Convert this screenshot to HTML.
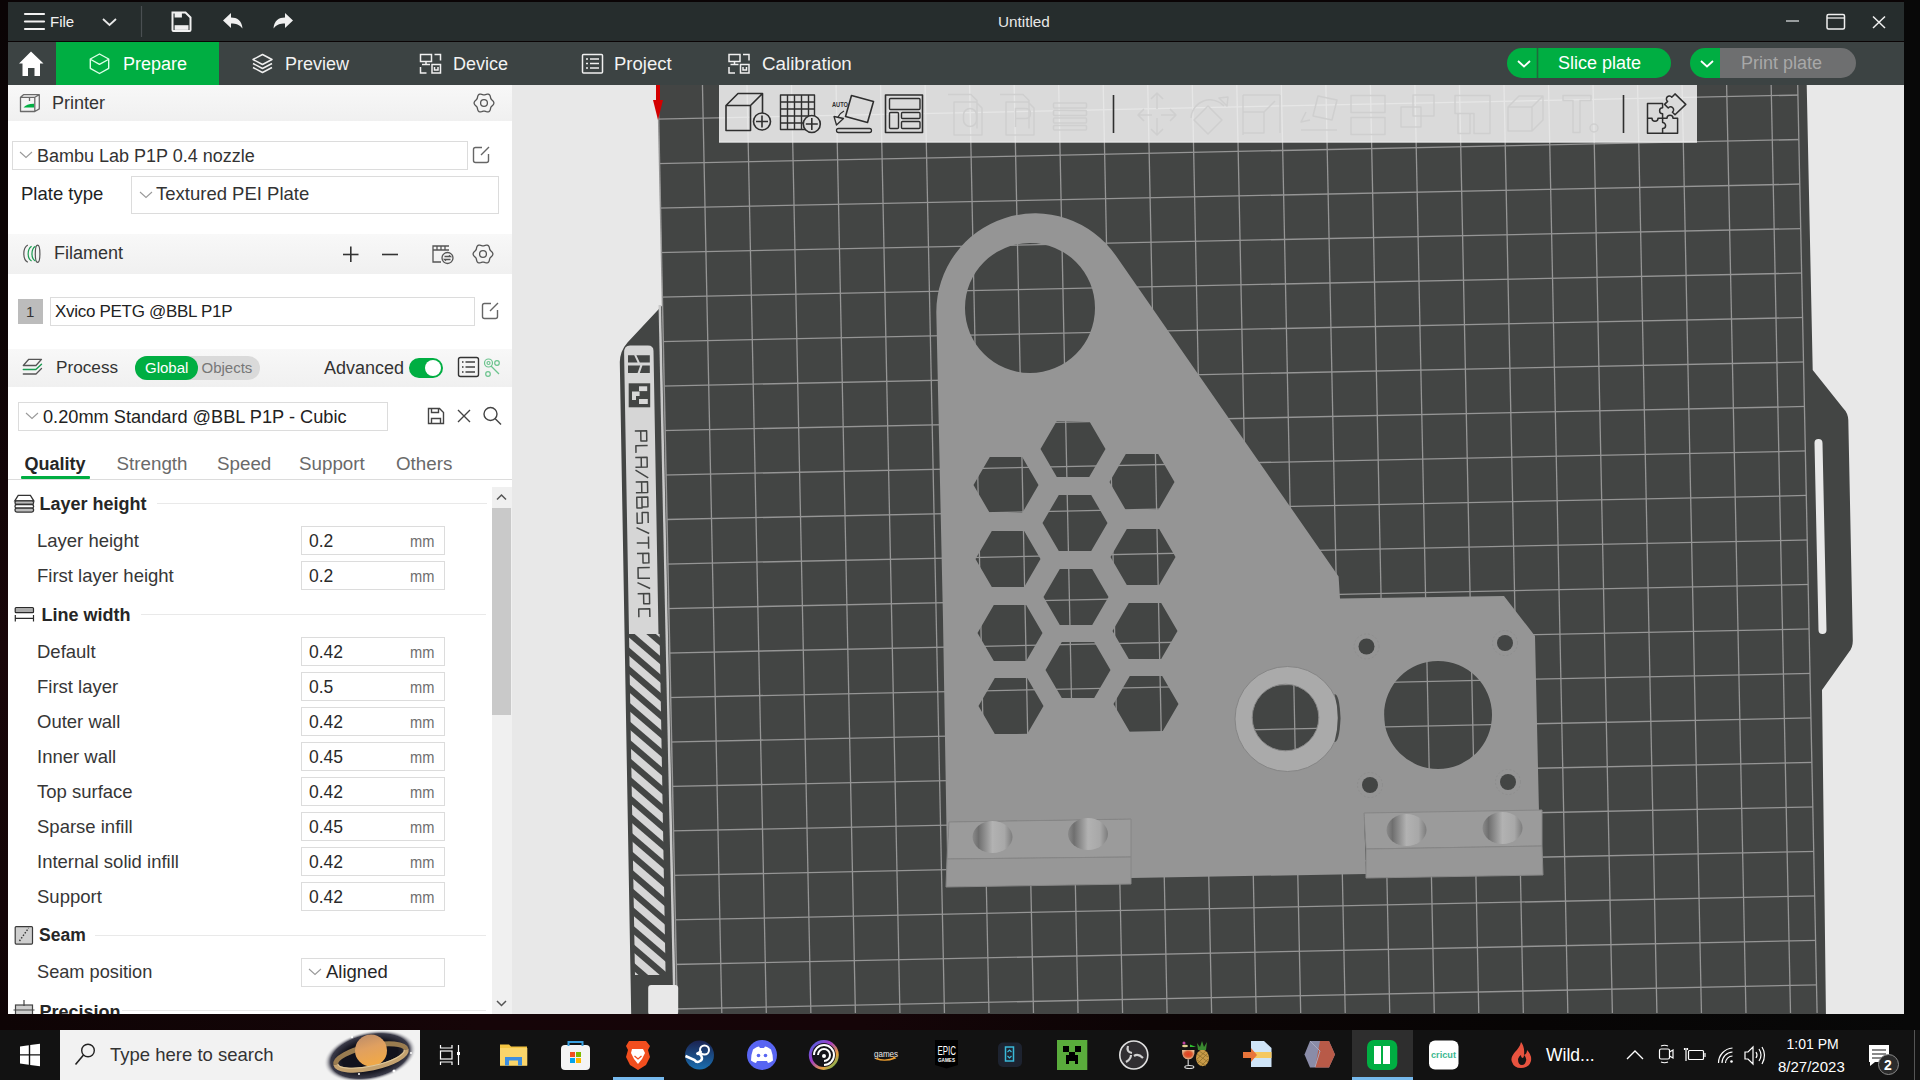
<!DOCTYPE html>
<html><head><meta charset="utf-8">
<style>
*{box-sizing:border-box;margin:0;padding:0}
html,body{width:1920px;height:1080px;overflow:hidden;background:linear-gradient(#0a0405 0%,#0d0405 30%,#190609 60%,#140507 85%,#0c0304 100%);font-family:"Liberation Sans",sans-serif}
.a{position:absolute}
.t{position:absolute;white-space:nowrap;line-height:1}
#title{left:8px;top:2px;width:1896px;height:39px;background:#262d2d}
#nav{left:8px;top:42px;width:1896px;height:43px;background:#3c4343}
#panel{left:8px;top:85px;width:504px;height:929px;background:#fff;overflow:hidden}
#view{left:512px;top:85px;width:1392px;height:929px;background:#e8e8e8;overflow:hidden}
#band{left:0;top:1014px;width:1920px;height:16px;background:linear-gradient(90deg,#0e0405,#160508 25%,#150508 45%,#0c0405 60%,#070505 80%,#080808)}
#rstrip{left:1904px;top:0;width:16px;height:1030px;background:#080808}
#taskbar{left:0;top:1030px;width:1920px;height:50px;background:#121212}
.hdr{position:absolute;left:0;width:504px;background:linear-gradient(#f7f7f7,#efefef)}
.lbl{font-size:18px;color:#363636}
.box{position:absolute;border:1px solid #dcdcdc;background:#fff}
.unit{font-size:14px;color:#6f6f6f}
svg{overflow:visible}
</style></head>
<body>
<div id="title" class="a"></div>
<svg class="a" style="left:0;top:0" width="1920" height="42" viewBox="0 0 1920 42">
 <g stroke="#f2f2f2" stroke-width="2.2" stroke-linecap="round" fill="none">
  <line x1="25" y1="14" x2="44" y2="14"/><line x1="25" y1="21.5" x2="44" y2="21.5"/><line x1="25" y1="29" x2="44" y2="29"/>
 </g>
 <polyline points="103,19 109.5,25 116,19" stroke="#e8e8e8" stroke-width="1.8" fill="none"/>
 <line x1="141.5" y1="6" x2="141.5" y2="37" stroke="#4a4f52" stroke-width="1.2"/>
 <!-- save -->
 <path d="M172.5,12.5 h13 l5,5 v12.5 a1,1 0 0 1 -1,1 h-16 a1,1 0 0 1 -1,-1 z" stroke="#f0f0f0" stroke-width="2" fill="none"/>
 <rect x="174.6" y="12" width="7.3" height="5.5" fill="#f0f0f0"/>
 <rect x="174.6" y="25.2" width="13.9" height="4.7" fill="#f0f0f0"/>
 <!-- undo -->
 <path d="M223,20.5 L231,13 L231,17.5 C237,17.5 242,20.5 242.5,28.5 C239.5,24.5 236,23.5 231,23.5 L231,28 Z" fill="#f0f0f0"/>
 <!-- redo -->
 <path d="M293,20.5 L285,13 L285,17.5 C279,17.5 274,20.5 273.5,28.5 C276.5,24.5 280,23.5 285,23.5 L285,28 Z" fill="#f0f0f0"/>
 <!-- window controls -->
 <line x1="1786" y1="21" x2="1799" y2="21" stroke="#bfc3c4" stroke-width="1.5"/>
 <rect x="1827" y="14.5" width="17.5" height="14.5" rx="1.5" fill="none" stroke="#f0f0f0" stroke-width="1.5"/>
 <line x1="1827" y1="18" x2="1844.5" y2="18" stroke="#f0f0f0" stroke-width="1.3"/>
 <g stroke="#f0f0f0" stroke-width="1.5"><line x1="1873" y1="16.5" x2="1885" y2="28"/><line x1="1885" y1="16.5" x2="1873" y2="28"/></g>
</svg>
<div class="t" style="left:50px;top:14px;font-size:15px;color:#f2f2f2">File</div>
<div class="t" style="left:998px;top:14px;font-size:15.3px;color:#e8e8e8">Untitled</div>

<div id="nav" class="a"></div>
<div class="a" style="left:56px;top:42px;width:163px;height:43px;background:#00ae42"></div>
<svg class="a" style="left:0;top:42px" width="1920" height="43" viewBox="0 42 1920 43">
 <!-- home -->
 <path d="M31,51.5 L43.5,63.5 L40,63.5 L40,76 L34.5,76 L34.5,68 L28,68 L28,76 L22.5,76 L22.5,63.5 L19,63.5 Z" fill="#ffffff"/>
 <!-- cube -->
 <g stroke="#dcffe8" stroke-width="1.4" fill="none" stroke-linejoin="round">
  <path d="M99.5,54 L108.7,59 L108.7,68.3 L99.5,73.5 L90.3,68.3 L90.3,59 Z"/>
  <path d="M90.8,59.5 L99.5,64.3 L108.3,59.5"/>
 </g>
 <!-- layers -->
 <g stroke="#f0f0f0" stroke-width="1.5" fill="none" stroke-linejoin="round">
  <path d="M262.5,54.5 L272,59.5 L262.5,64.5 L253,59.5 Z"/>
  <path d="M253,63.5 L262.5,68.5 L272,63.5"/>
  <path d="M253,67.5 L262.5,72.5 L272,67.5"/>
 </g>
 <!-- device -->
 <g stroke="#f0f0f0" stroke-width="1.5" fill="none">
  <rect x="420.5" y="54.5" width="11" height="7"/><line x1="426" y1="61.5" x2="426" y2="64"/><line x1="422" y1="64.5" x2="430" y2="64.5"/>
  <path d="M434.5,54.5 h6 v6"/><path d="M420.5,67 v6 h6"/>
  <rect x="432" y="64.5" width="8.5" height="8.5"/><path d="M434.5,67 v3 h3.5 v-3"/>
 </g>
 <!-- project -->
 <g stroke="#f0f0f0" stroke-width="1.5" fill="none">
  <rect x="582.5" y="54.5" width="20" height="18.5" rx="1"/>
  <line x1="586" y1="59" x2="588" y2="59"/><line x1="590" y1="59" x2="599" y2="59"/>
  <line x1="586" y1="63.5" x2="588" y2="63.5"/><line x1="590" y1="63.5" x2="599" y2="63.5"/>
  <line x1="586" y1="68" x2="588" y2="68"/><line x1="590" y1="68" x2="599" y2="68"/>
 </g>
 <!-- calibration -->
 <g stroke="#f0f0f0" stroke-width="1.5" fill="none">
  <rect x="729" y="54.5" width="11" height="7"/><line x1="734.5" y1="61.5" x2="734.5" y2="64"/><line x1="730.5" y1="64.5" x2="738.5" y2="64.5"/>
  <path d="M743,54.5 h6 v6"/><path d="M729,67 v6 h6"/>
  <rect x="740.5" y="64.5" width="8.5" height="8.5"/><path d="M743,67 v3 h3.5 v-3"/>
 </g>
 <!-- slice plate -->
 <rect x="1507" y="48" width="164" height="30" rx="15" fill="#00ae42"/>
 <line x1="1537.5" y1="48" x2="1537.5" y2="78" stroke="#1f6b3c" stroke-width="1.6"/>
 <polyline points="1518,61 1524,66.5 1530,61" stroke="#fff" stroke-width="1.8" fill="none"/>
 <!-- print plate -->
 <path d="M1720,48 H1841 A15,15 0 0 1 1841,78 H1720 Z" fill="#6e6f70"/>
 <path d="M1720,48 H1705 A15,15 0 0 0 1705,78 H1720 Z" fill="#00ae42"/>
 <polyline points="1701,61 1707,66.5 1713,61" stroke="#fff" stroke-width="1.8" fill="none"/>
</svg>
<div class="t" style="left:123px;top:55px;font-size:18px;color:#ffffff">Prepare</div>
<div class="t" style="left:285px;top:55px;font-size:18px;color:#f2f2f2">Preview</div>
<div class="t" style="left:453px;top:55px;font-size:18px;color:#f2f2f2">Device</div>
<div class="t" style="left:614px;top:55px;font-size:18.5px;color:#f2f2f2">Project</div>
<div class="t" style="left:762px;top:55px;font-size:18.8px;color:#f2f2f2">Calibration</div>
<div class="t" style="left:1558px;top:54px;font-size:18px;color:#ffffff">Slice plate</div>
<div class="t" style="left:1741px;top:54px;font-size:18px;color:#a8a8a8">Print plate</div>

<div id="panel" class="a"></div>
<!-- headers -->
<div class="a" style="left:8px;top:85px;width:504px;height:36px;background:linear-gradient(#f8f8f8,#f0f0f0)"></div>
<div class="a" style="left:8px;top:234px;width:504px;height:40px;background:linear-gradient(#f8f8f8,#f0f0f0)"></div>
<div class="a" style="left:8px;top:349px;width:504px;height:38px;background:linear-gradient(#f8f8f8,#f0f0f0)"></div>
<!-- boxes -->
<div class="box" style="left:12px;top:141px;width:456px;height:29px"></div>
<div class="box" style="left:131px;top:176px;width:368px;height:38px"></div>
<div class="a" style="left:18px;top:299px;width:25px;height:25px;background:#bcbcbc"></div>
<div class="box" style="left:50px;top:297px;width:425px;height:29px"></div>
<div class="a" style="left:135px;top:356px;width:125px;height:24px;border-radius:12px;background:#dadada"></div>
<div class="a" style="left:135px;top:356px;width:63px;height:24px;border-radius:12px;background:#00ae42"></div>
<div class="a" style="left:409px;top:358px;width:34px;height:20px;border-radius:10px;background:#00ae42"></div>
<div class="a" style="left:425px;top:360px;width:16px;height:16px;border-radius:8px;background:#fff"></div>
<div class="box" style="left:18px;top:402px;width:370px;height:29px"></div>
<!-- tabs line -->
<div class="a" style="left:8px;top:479px;width:504px;height:1px;background:#dcdcdc"></div>
<div class="a" style="left:21px;top:476px;width:69px;height:3px;border-radius:1px;background:#00ae42"></div>
<!-- scrollbar -->
<div class="a" style="left:492px;top:487px;width:20px;height:527px;background:#f0f0f0"></div>
<div class="a" style="left:492px;top:508px;width:19px;height:207px;background:#c9c9c9"></div>
<!-- section lines -->
<div class="a" style="left:157px;top:503px;width:330px;height:1px;background:#e9e9e9"></div>
<div class="a" style="left:141px;top:614px;width:345px;height:1px;background:#e9e9e9"></div>
<div class="a" style="left:95px;top:935px;width:391px;height:1px;background:#e9e9e9"></div>
<div class="a" style="left:122px;top:1010px;width:364px;height:1px;background:#e9e9e9"></div>
<!-- value boxes -->
<div class="box" style="left:301px;top:526px;width:144px;height:29px"></div>
<div class="box" style="left:301px;top:561px;width:144px;height:29px"></div>
<div class="box" style="left:301px;top:637px;width:144px;height:29px"></div>
<div class="box" style="left:301px;top:672px;width:144px;height:29px"></div>
<div class="box" style="left:301px;top:707px;width:144px;height:29px"></div>
<div class="box" style="left:301px;top:742px;width:144px;height:29px"></div>
<div class="box" style="left:301px;top:777px;width:144px;height:29px"></div>
<div class="box" style="left:301px;top:812px;width:144px;height:29px"></div>
<div class="box" style="left:301px;top:847px;width:144px;height:29px"></div>
<div class="box" style="left:301px;top:882px;width:144px;height:29px"></div>
<div class="box" style="left:301px;top:958px;width:144px;height:29px"></div>
<!-- icons -->
<svg class="a" style="left:0;top:85px" width="512" height="929" viewBox="0 85 512 929">
 <!-- printer icon -->
 <g stroke="#6a6a6a" stroke-width="1.3" fill="none" stroke-linejoin="round">
  <path d="M20.5,97.3 h14.3 v14.2 h-14.3 z M20.5,97.3 l3,-2.6 h15.8 v14.2 l-4.5,2.6 M34.8,97.3 l4.5,-2.6"/>
  <path d="M29.5,97.5 v3.5"/>
 </g>
 <path d="M23.5,107.6 q3,-4 10.5,-3.9 v3.9 z" fill="#00ae42"/>
 <!-- gear printer -->
 <g stroke="#555" stroke-width="1.3" fill="none">
  <path d="M493.90,103.00 L493.74,103.85 L493.31,104.64 L492.69,105.33 L492.03,105.92 L491.45,106.47 L491.01,107.05 L490.73,107.72 L490.55,108.50 L490.36,109.36 L490.07,110.24 L489.61,111.01 L488.95,111.57 L488.13,111.86 L487.23,111.88 L486.33,111.69 L485.48,111.42 L484.72,111.19 L484.00,111.10 L483.28,111.19 L482.52,111.42 L481.67,111.69 L480.77,111.88 L479.87,111.86 L479.05,111.57 L478.39,111.01 L477.93,110.24 L477.64,109.36 L477.45,108.50 L477.27,107.72 L476.99,107.05 L476.55,106.47 L475.97,105.92 L475.31,105.33 L474.69,104.64 L474.26,103.85 L474.10,103.00 L474.26,102.15 L474.69,101.36 L475.31,100.67 L475.97,100.08 L476.55,99.53 L476.99,98.95 L477.27,98.28 L477.45,97.50 L477.64,96.64 L477.93,95.76 L478.39,94.99 L479.05,94.43 L479.87,94.14 L480.77,94.12 L481.67,94.31 L482.52,94.58 L483.28,94.81 L484.00,94.90 L484.72,94.81 L485.48,94.58 L486.33,94.31 L487.23,94.12 L488.13,94.14 L488.95,94.43 L489.61,94.99 L490.07,95.76 L490.36,96.64 L490.55,97.50 L490.73,98.28 L491.01,98.95 L491.45,99.53 L492.03,100.08 L492.69,100.67 L493.31,101.36 L493.74,102.15 Z"/>
  <circle cx="484" cy="103" r="3.4"/>
 </g>
 <!-- chevrons -->
 <g stroke="#9a9a9a" stroke-width="1.1" fill="none">
  <polyline points="20,152 26,157.5 32,152"/>
  <polyline points="140,192 146,197.5 152,192"/>
  <polyline points="26,413 32,418.5 38,413"/>
  <polyline points="309,969 315,974.5 321,969"/>
 </g>
 <!-- edit icons -->
 <g stroke="#666" stroke-width="1.4" fill="none">
  <path d="M482,147.5 h-6.5 a2,2 0 0 0 -2,2 v11 a2,2 0 0 0 2,2 h11 a2,2 0 0 0 2,-2 v-6.5 M481,155 l8,-8"/>
  <path d="M491,303.5 h-6.5 a2,2 0 0 0 -2,2 v11 a2,2 0 0 0 2,2 h11 a2,2 0 0 0 2,-2 v-6.5 M490,311 l8,-8"/>
 </g>
 <!-- filament icon -->
 <g stroke="#555" stroke-width="1.2" fill="none">
  <path d="M27.8,245 C22.5,248 22.5,259.5 27.8,262.3"/>
  <ellipse cx="37.6" cy="253.8" rx="2.3" ry="8.6"/>
 </g>
 <g stroke="#1a9a50" stroke-width="1.2" fill="none">
  <path d="M31.6,246.2 C27,249 27,258.5 31.6,261"/>
  <path d="M35.4,246.2 C30.8,249 30.8,258.5 35.4,261"/>
 </g>
 <!-- plus minus -->
 <g stroke="#333" stroke-width="1.6">
  <line x1="343" y1="254.5" x2="358.5" y2="254.5"/><line x1="350.8" y1="246.5" x2="350.8" y2="262"/>
  <line x1="382" y1="254.5" x2="398" y2="254.5"/>
 </g>
 <!-- filament sync icon -->
 <g stroke="#555" stroke-width="1.3" fill="none">
  <path d="M449,246 h-16 v16 h8"/><path d="M433,250 h16 M437,246 v4 M441,246 v4 M445,246 v4"/>
  <circle cx="447.5" cy="258" r="5.5" fill="#f3f3f3"/>
  <path d="M444.5,256.5 h6 l-1.5,-1.3 M450.5,259.5 h-6 l1.5,1.3"/>
 </g>
 <!-- gear filament -->
 <g stroke="#555" stroke-width="1.3" fill="none">
  <path d="M492.90,254.00 L492.74,254.85 L492.31,255.64 L491.69,256.33 L491.03,256.92 L490.45,257.47 L490.01,258.05 L489.73,258.72 L489.55,259.50 L489.36,260.36 L489.07,261.24 L488.61,262.01 L487.95,262.57 L487.13,262.86 L486.23,262.88 L485.33,262.69 L484.48,262.42 L483.72,262.19 L483.00,262.10 L482.28,262.19 L481.52,262.42 L480.67,262.69 L479.77,262.88 L478.87,262.86 L478.05,262.57 L477.39,262.01 L476.93,261.24 L476.64,260.36 L476.45,259.50 L476.27,258.72 L475.99,258.05 L475.55,257.47 L474.97,256.92 L474.31,256.33 L473.69,255.64 L473.26,254.85 L473.10,254.00 L473.26,253.15 L473.69,252.36 L474.31,251.67 L474.97,251.08 L475.55,250.53 L475.99,249.95 L476.27,249.28 L476.45,248.50 L476.64,247.64 L476.93,246.76 L477.39,245.99 L478.05,245.43 L478.87,245.14 L479.77,245.12 L480.67,245.31 L481.52,245.58 L482.28,245.81 L483.00,245.90 L483.72,245.81 L484.48,245.58 L485.33,245.31 L486.23,245.12 L487.13,245.14 L487.95,245.43 L488.61,245.99 L489.07,246.76 L489.36,247.64 L489.55,248.50 L489.73,249.28 L490.01,249.95 L490.45,250.53 L491.03,251.08 L491.69,251.67 L492.31,252.36 L492.74,253.15 Z"/>
  <circle cx="483" cy="254" r="3.4"/>
 </g>
 <!-- process icon -->
 <g stroke="#555" stroke-width="1.3" fill="none" stroke-linejoin="round" stroke-linecap="round">
  <path d="M23.3,365.5 L28.8,359.3 H41.5 L36,365.5 Z"/>
  <path d="M23.3,374 H36 L41.5,368.5"/>
 </g>
 <path d="M23.3,369.5 H35.8 L41.5,364.3" stroke="#1a9a50" stroke-width="1.4" fill="none" stroke-linecap="round"/>
 <!-- list icon -->
 <g stroke="#333" stroke-width="1.4" fill="none">
  <rect x="458.5" y="357.5" width="20" height="19" rx="2"/>
  <line x1="462" y1="362" x2="463.5" y2="362"/><line x1="465.5" y1="362" x2="475" y2="362"/>
  <line x1="462" y1="367" x2="463.5" y2="367"/><line x1="465.5" y1="367" x2="475" y2="367"/>
  <line x1="462" y1="372" x2="463.5" y2="372"/><line x1="465.5" y1="372" x2="475" y2="372"/>
 </g>
 <!-- green gear icon -->
 <g stroke="#6cc48e" stroke-width="1.2" fill="none">
  <circle cx="488.5" cy="363" r="4"/><circle cx="488.5" cy="363" r="1.5"/><circle cx="497" cy="363" r="2.3"/><circle cx="488" cy="374" r="2.3"/>
  <line x1="491" y1="366" x2="499" y2="374"/>
 </g>
 <!-- save x search -->
 <g stroke="#444" stroke-width="1.4" fill="none">
  <path d="M428.5,408.5 h11 l4,4 v11 h-15 z M431.5,408.5 v4 h7 v-4 M431.5,423.5 v-5 h9 v5"/>
  <path d="M458,410 l12,12 M470,410 l-12,12"/>
  <circle cx="490.5" cy="414" r="6.5"/><line x1="495" y1="418.5" x2="501" y2="424.5"/>
 </g>
 <!-- scroll arrows -->
 <g stroke="#555" stroke-width="1.5" fill="none">
  <polyline points="497,499.5 501.5,495 506,499.5"/>
  <polyline points="497,1001 501.5,1005.5 506,1001"/>
 </g>
 <!-- section icons -->
 <g stroke="#555" stroke-width="1.2" fill="none">
  <path d="M14.8,500.8 L18.2,495.4 H30.4 L33.8,500.8 Z" fill="#fff" stroke="#333" stroke-width="1.3"/><rect x="15" y="500.8" width="18.6" height="3.7" rx="1.8" fill="#bbb" stroke="#333" stroke-width="1.3"/><rect x="15" y="504.5" width="18.6" height="3.7" rx="1.8" fill="#fff" stroke="#333" stroke-width="1.3"/><rect x="15" y="508.2" width="18.6" height="3.9" rx="1.8" fill="#bbb" stroke="#333" stroke-width="1.3"/>
  <rect x="15.2" y="607.5" width="18.3" height="5.2" rx="1" fill="#aaa" stroke="#2a2a2a" stroke-width="1.2"/><path d="M15.3,615 v6.6 M33.5,615 v6.6 M15.3,618.4 h18.2" stroke="#2a2a2a" stroke-width="1.2"/>
  <rect x="15.2" y="926.6" width="17.3" height="17.5" rx="1" fill="#cfcfcf" stroke="#3a3a3a" stroke-width="1.2"/>
  <rect x="15.5" y="1005" width="17" height="10" fill="#ccc" stroke="#444" stroke-width="1.2"/><path d="M24,1000 v6 M13.5,1010 h21" stroke="#444" stroke-width="1.2"/>
 </g>
 <path d="M19.5,941 L28.6,928" stroke="#333" stroke-width="1.4" stroke-dasharray="1.5 1.6" fill="none"/>
</svg>
<!-- text -->
<div class="t" style="left:52px;top:94px;font-size:18px;color:#333">Printer</div>
<div class="t" style="left:37px;top:147px;font-size:18px;color:#333">Bambu Lab P1P 0.4 nozzle</div>
<div class="t" style="left:21px;top:185px;font-size:18.5px;color:#222">Plate type</div>
<div class="t" style="left:156px;top:185px;font-size:18.5px;color:#333">Textured PEI Plate</div>
<div class="t" style="left:54px;top:244px;font-size:18px;color:#333">Filament</div>
<div class="t" style="left:26px;top:304px;font-size:15px;color:#333">1</div>
<div class="t" style="left:55px;top:302.5px;font-size:17px;color:#222;letter-spacing:-0.3px">Xvico PETG @BBL P1P</div>
<div class="t" style="left:56px;top:358.5px;font-size:17.2px;color:#333">Process</div>
<div class="t" style="left:145px;top:360px;font-size:15px;color:#fff">Global</div>
<div class="t" style="left:201.5px;top:360px;font-size:15px;color:#777">Objects</div>
<div class="t" style="left:324px;top:358.5px;font-size:18px;color:#333">Advanced</div>
<div class="t" style="left:43px;top:407.5px;font-size:18.2px;color:#222">0.20mm Standard @BBL P1P - Cubic</div>
<div class="t" style="left:24.5px;top:454.5px;font-size:18px;font-weight:bold;color:#262626">Quality</div>
<div class="t" style="left:116.5px;top:454.5px;font-size:18.8px;color:#6a6a6a">Strength</div>
<div class="t" style="left:217px;top:454.5px;font-size:18.8px;color:#6a6a6a">Speed</div>
<div class="t" style="left:299px;top:454.5px;font-size:18.8px;color:#6a6a6a">Support</div>
<div class="t" style="left:396px;top:454.5px;font-size:18.8px;color:#6a6a6a">Others</div>
<div class="t" style="left:39.5px;top:494.5px;font-size:18px;font-weight:bold;color:#262626">Layer height</div>
<div class="t" style="left:41.5px;top:605.5px;font-size:18px;font-weight:bold;color:#262626">Line width</div>
<div class="t" style="left:39px;top:926.5px;font-size:17.5px;font-weight:bold;color:#262626">Seam</div>
<div class="t" style="left:39.5px;top:1003px;font-size:18px;font-weight:bold;color:#262626">Precision</div>
<div class="t" style="left:37px;top:531.8px;font-size:18.5px;color:#363636">Layer height</div>
<div class="t" style="left:309px;top:533.3px;font-size:17.5px;color:#2a2a2a">0.2</div>
<div class="t" style="left:409.5px;top:532.8px;font-size:17px;color:#707070;transform:scaleX(0.86);transform-origin:0 0">mm</div>
<div class="t" style="left:37px;top:566.8px;font-size:18.5px;color:#363636">First layer height</div>
<div class="t" style="left:309px;top:568.3px;font-size:17.5px;color:#2a2a2a">0.2</div>
<div class="t" style="left:409.5px;top:567.8px;font-size:17px;color:#707070;transform:scaleX(0.86);transform-origin:0 0">mm</div>
<div class="t" style="left:37px;top:642.8px;font-size:18.5px;color:#363636">Default</div>
<div class="t" style="left:309px;top:644.3px;font-size:17.5px;color:#2a2a2a">0.42</div>
<div class="t" style="left:409.5px;top:643.8px;font-size:17px;color:#707070;transform:scaleX(0.86);transform-origin:0 0">mm</div>
<div class="t" style="left:37px;top:677.8px;font-size:18.5px;color:#363636">First layer</div>
<div class="t" style="left:309px;top:679.3px;font-size:17.5px;color:#2a2a2a">0.5</div>
<div class="t" style="left:409.5px;top:678.8px;font-size:17px;color:#707070;transform:scaleX(0.86);transform-origin:0 0">mm</div>
<div class="t" style="left:37px;top:712.8px;font-size:18.5px;color:#363636">Outer wall</div>
<div class="t" style="left:309px;top:714.3px;font-size:17.5px;color:#2a2a2a">0.42</div>
<div class="t" style="left:409.5px;top:713.8px;font-size:17px;color:#707070;transform:scaleX(0.86);transform-origin:0 0">mm</div>
<div class="t" style="left:37px;top:747.8px;font-size:18.5px;color:#363636">Inner wall</div>
<div class="t" style="left:309px;top:749.3px;font-size:17.5px;color:#2a2a2a">0.45</div>
<div class="t" style="left:409.5px;top:748.8px;font-size:17px;color:#707070;transform:scaleX(0.86);transform-origin:0 0">mm</div>
<div class="t" style="left:37px;top:782.8px;font-size:18.5px;color:#363636">Top surface</div>
<div class="t" style="left:309px;top:784.3px;font-size:17.5px;color:#2a2a2a">0.42</div>
<div class="t" style="left:409.5px;top:783.8px;font-size:17px;color:#707070;transform:scaleX(0.86);transform-origin:0 0">mm</div>
<div class="t" style="left:37px;top:817.8px;font-size:18.5px;color:#363636">Sparse infill</div>
<div class="t" style="left:309px;top:819.3px;font-size:17.5px;color:#2a2a2a">0.45</div>
<div class="t" style="left:409.5px;top:818.8px;font-size:17px;color:#707070;transform:scaleX(0.86);transform-origin:0 0">mm</div>
<div class="t" style="left:37px;top:852.8px;font-size:18.5px;color:#363636">Internal solid infill</div>
<div class="t" style="left:309px;top:854.3px;font-size:17.5px;color:#2a2a2a">0.42</div>
<div class="t" style="left:409.5px;top:853.8px;font-size:17px;color:#707070;transform:scaleX(0.86);transform-origin:0 0">mm</div>
<div class="t" style="left:37px;top:887.8px;font-size:18.5px;color:#363636">Support</div>
<div class="t" style="left:309px;top:889.3px;font-size:17.5px;color:#2a2a2a">0.42</div>
<div class="t" style="left:409.5px;top:888.8px;font-size:17px;color:#707070;transform:scaleX(0.86);transform-origin:0 0">mm</div>
<div class="t" style="left:37px;top:963.4px;font-size:18.2px;color:#363636">Seam position</div>
<div class="t" style="left:326px;top:963.4px;font-size:18.5px;color:#262626">Aligned</div>

<div id="view" class="a">
<svg class="a" style="left:0;top:0" width="1392" height="929" viewBox="512 85 1392 929">
<defs>
<clipPath id="gridclip"><polygon points="657.7,75.0 677.4,1020.0 1817.2,1020.0 1797.5,75.0"/></clipPath>
<linearGradient id="hg" x1="0" x2="1" y1="0" y2="0"><stop offset="0" stop-color="#8a8a8a"/><stop offset="0.15" stop-color="#6f6f6f"/><stop offset="0.5" stop-color="#b2b2b2"/><stop offset="0.8" stop-color="#a8a8a8"/><stop offset="1" stop-color="#7c7c7c"/></linearGradient>
<pattern id="hatch" patternUnits="userSpaceOnUse" width="40" height="18" patternTransform="rotate(0)"><rect width="40" height="18" fill="#d3d3d3"/></pattern>
</defs>
<path fill="#434544" d="M657.8,75 L662.6,305 L627.5,342.5 Q620,351 619.8,362 L631.3,1020 L1826,1020 L1822,690 L1849,652 Q1853,647 1852.8,640 L1848.3,420 Q1848,413 1843,408 L1812.7,370 L1806.5,75 Z"/>
<g clip-path="url(#gridclip)" stroke="#959595" stroke-width="1.3" fill="none">
<line x1="702.45" y1="85" x2="721.80" y2="1013"/>
<line x1="746.98" y1="85" x2="766.33" y2="1013"/>
<line x1="791.51" y1="85" x2="810.86" y2="1013"/>
<line x1="836.04" y1="85" x2="855.39" y2="1013"/>
<line x1="880.57" y1="85" x2="899.92" y2="1013"/>
<line x1="925.10" y1="85" x2="944.45" y2="1013"/>
<line x1="969.63" y1="85" x2="988.98" y2="1013"/>
<line x1="1014.16" y1="85" x2="1033.50" y2="1013"/>
<line x1="1058.68" y1="85" x2="1078.03" y2="1013"/>
<line x1="1103.21" y1="85" x2="1122.56" y2="1013"/>
<line x1="1147.74" y1="85" x2="1167.09" y2="1013"/>
<line x1="1192.27" y1="85" x2="1211.62" y2="1013"/>
<line x1="1236.80" y1="85" x2="1256.15" y2="1013"/>
<line x1="1281.33" y1="85" x2="1300.68" y2="1013"/>
<line x1="1325.86" y1="85" x2="1345.21" y2="1013"/>
<line x1="1370.39" y1="85" x2="1389.74" y2="1013"/>
<line x1="1414.92" y1="85" x2="1434.27" y2="1013"/>
<line x1="1459.45" y1="85" x2="1478.79" y2="1013"/>
<line x1="1503.97" y1="85" x2="1523.32" y2="1013"/>
<line x1="1548.50" y1="85" x2="1567.85" y2="1013"/>
<line x1="1593.03" y1="85" x2="1612.38" y2="1013"/>
<line x1="1637.56" y1="85" x2="1656.91" y2="1013"/>
<line x1="1682.09" y1="85" x2="1701.44" y2="1013"/>
<line x1="1726.62" y1="85" x2="1745.97" y2="1013"/>
<line x1="1771.15" y1="85" x2="1790.50" y2="1013"/>
<line x1="640" y1="74.99" x2="1820" y2="50.12"/>
<line x1="640" y1="119.50" x2="1820" y2="94.62"/>
<line x1="640" y1="164.01" x2="1820" y2="139.13"/>
<line x1="640" y1="208.51" x2="1820" y2="183.64"/>
<line x1="640" y1="253.02" x2="1820" y2="228.15"/>
<line x1="640" y1="297.53" x2="1820" y2="272.66"/>
<line x1="640" y1="342.04" x2="1820" y2="317.16"/>
<line x1="640" y1="386.55" x2="1820" y2="361.67"/>
<line x1="640" y1="431.05" x2="1820" y2="406.18"/>
<line x1="640" y1="475.56" x2="1820" y2="450.69"/>
<line x1="640" y1="520.07" x2="1820" y2="495.20"/>
<line x1="640" y1="564.58" x2="1820" y2="539.70"/>
<line x1="640" y1="609.09" x2="1820" y2="584.21"/>
<line x1="640" y1="653.59" x2="1820" y2="628.72"/>
<line x1="640" y1="698.10" x2="1820" y2="673.23"/>
<line x1="640" y1="742.61" x2="1820" y2="717.74"/>
<line x1="640" y1="787.12" x2="1820" y2="762.24"/>
<line x1="640" y1="831.63" x2="1820" y2="806.75"/>
<line x1="640" y1="876.13" x2="1820" y2="851.26"/>
<line x1="640" y1="920.64" x2="1820" y2="895.77"/>
<line x1="640" y1="965.15" x2="1820" y2="940.28"/>
<line x1="640" y1="1009.66" x2="1820" y2="984.78"/>
</g>
<line x1="657.92" y1="85" x2="677.27" y2="1013" stroke="#959595" stroke-width="1.5"/>
<line x1="1797.7" y1="85" x2="1817.1" y2="1013" stroke="#959595" stroke-width="1.3"/>
<line x1="659.8" y1="305" x2="674.7" y2="1013" stroke="#c8c8c8" stroke-width="2.5"/>
<line x1="1818.5" y1="443" x2="1822.5" y2="630" stroke="#e8e8e8" stroke-width="8" stroke-linecap="round"/>
<path fill="#d6d6d6" d="M624.1,353.0 Q624.0,345.5 630.0,345.5 L648.0,345.5 Q653.5,345.5 653.5,351.0 L664.5,976 L635.0,976 Z"/>
<g fill="#434544">
<polygon points="628,355.2 634.2,355.2 637.6,362.6 628,362.6"/><polygon points="636.4,355.2 649.8,355.2 649.8,362.6 639.8,362.6"/>
<polygon points="628,365.6 640.2,365.6 637.6,373 628,373"/><polygon points="642.4,365.6 649.8,365.6 649.8,373 639.8,373"/>
<rect x="628.7" y="383.3" width="21.5" height="24"/>
</g>
<g fill="#d8d8d8"><rect x="639" y="386.3" width="8.2" height="4.8"/><polygon points="632,391.5 639.6,391.5 639.6,396 636,396 636,400 632,400"/><rect x="639" y="399" width="8.8" height="5"/></g>
<path transform="translate(634.8,430.2) rotate(89)" d="M0.8,0 L0.8,-11.799999999999999 L11.0,-11.799999999999999 L11.0,-5.922 L0.8,-5.922 M15.600000000000001,-12.6 L15.600000000000001,-0.8 L22.7,-0.8 M27.3,0 L27.3,-11.799999999999999 L37.0,-11.799999999999999 L37.0,0 M27.3,-5.922 L37.0,-5.922 M40,0 L48,-12.6 M51.8,0 L51.8,-11.799999999999999 L62.5,-11.799999999999999 L62.5,0 M51.8,-5.922 L62.5,-5.922 M67.1,-0.8 L67.1,-11.799999999999999 L76.8,-11.799999999999999 L76.8,-5.922 L77.8,-5.922 L77.8,-0.8 Z M67.1,-5.922 L76.8,-5.922 M93.0,-11.799999999999999 L82.39999999999999,-11.799999999999999 L82.39999999999999,-5.922 L93.0,-5.922 L93.0,-0.8 L82.39999999999999,-0.8 M97.5,0 L103.5,-12.6 M106.6,-11.799999999999999 L118.8,-11.799999999999999 M112.69999999999999,-11.799999999999999 L112.69999999999999,0 M123.3,0 L123.3,-11.799999999999999 L132.89999999999998,-11.799999999999999 L132.89999999999998,-5.922 L123.3,-5.922 M137.60000000000002,-12.6 L137.60000000000002,-0.8 L148.2,-0.8 L148.2,-12.6 M152.5,0 L158.5,-12.6 M163.60000000000002,0 L163.60000000000002,-11.799999999999999 L173.7,-11.799999999999999 L173.7,-5.922 L163.60000000000002,-5.922 M186.99999999999997,-11.799999999999999 L178.9,-11.799999999999999 L178.9,-0.8 L186.99999999999997,-0.8" fill="none" stroke="#434544" stroke-width="1.5" stroke-linejoin="round"/>
<clipPath id="hclip"><polygon points="629.0,634 659.6,634 665.6,975 635.0,975"/></clipPath>
<polygon fill="#434544" points="628.0,634 661.0,634 667.0,976 634.0,976"/>
<g clip-path="url(#hclip)" fill="#d6d6d6">
<polygon points="600,575.9 680,644.7 680,654.7 600,585.9"/>
<polygon points="600,594.2 680,663.0 680,673.0 600,604.2"/>
<polygon points="600,612.5 680,681.3 680,691.3 600,622.5"/>
<polygon points="600,630.8 680,699.6 680,709.6 600,640.8"/>
<polygon points="600,649.1 680,717.9 680,727.9 600,659.1"/>
<polygon points="600,667.4 680,736.2 680,746.2 600,677.4"/>
<polygon points="600,685.7 680,754.5 680,764.5 600,695.7"/>
<polygon points="600,704.0 680,772.8 680,782.8 600,714.0"/>
<polygon points="600,722.3 680,791.1 680,801.1 600,732.3"/>
<polygon points="600,740.6 680,809.4 680,819.4 600,750.6"/>
<polygon points="600,758.9 680,827.7 680,837.7 600,768.9"/>
<polygon points="600,777.2 680,846.0 680,856.0 600,787.2"/>
<polygon points="600,795.5 680,864.3 680,874.3 600,805.5"/>
<polygon points="600,813.8 680,882.6 680,892.6 600,823.8"/>
<polygon points="600,832.1 680,900.9 680,910.9 600,842.1"/>
<polygon points="600,850.4 680,919.2 680,929.2 600,860.4"/>
<polygon points="600,868.7 680,937.5 680,947.5 600,878.7"/>
<polygon points="600,887.0 680,955.8 680,965.8 600,897.0"/>
<polygon points="600,905.3 680,974.1 680,984.1 600,915.3"/>
<polygon points="600,923.6 680,992.4 680,1002.4 600,933.6"/>
<polygon points="600,941.9 680,1010.7 680,1020.7 600,951.9"/>
<polygon points="600,960.2 680,1029.0 680,1039.0 600,970.2"/>
</g>
<rect x="648.2" y="985" width="30" height="30" rx="3" fill="#e8e8e8"/>
<polygon points="656,85 660,85 660,100 663,100 658,120 653,100 656,100" fill="#d30000"/>
<path fill="#959595" fill-rule="evenodd" d="M936.3,311.9 A98.6,98.6 0 0,1 1115.6,255.3 L1338.6,576.5 L1340,598.5 L1504,596 L1535,636 L1539,812 L1364,813 L1366,874 L1131,878 L1131,819 L949,822 L947,858 L943,620 Z M965.0,308.0 a65,65 0 1,0 130.0,0 a65,65 0 1,0 -130.0,0 Z M973.5,485.0 L989.8,456.9 L1022.2,456.9 L1038.5,485.0 L1022.2,513.1 L989.8,513.1 Z M975.5,559.0 L991.8,530.9 L1024.2,530.9 L1040.5,559.0 L1024.2,587.1 L991.8,587.1 Z M977.5,633.0 L993.8,604.9 L1026.2,604.9 L1042.5,633.0 L1026.2,661.1 L993.8,661.1 Z M978.5,706.0 L994.8,677.9 L1027.2,677.9 L1043.5,706.0 L1027.2,734.1 L994.8,734.1 Z M1040.5,449.0 L1056.8,420.9 L1089.2,420.9 L1105.5,449.0 L1089.2,477.1 L1056.8,477.1 Z M1042.5,523.0 L1058.8,494.9 L1091.2,494.9 L1107.5,523.0 L1091.2,551.1 L1058.8,551.1 Z M1043.5,597.0 L1059.8,568.9 L1092.2,568.9 L1108.5,597.0 L1092.2,625.1 L1059.8,625.1 Z M1045.5,670.0 L1061.8,641.9 L1094.2,641.9 L1110.5,670.0 L1094.2,698.1 L1061.8,698.1 Z M1109.5,482.0 L1125.8,453.9 L1158.2,453.9 L1174.5,482.0 L1158.2,510.1 L1125.8,510.1 Z M1110.5,557.0 L1126.8,528.9 L1159.2,528.9 L1175.5,557.0 L1159.2,585.1 L1126.8,585.1 Z M1112.5,631.0 L1128.8,602.9 L1161.2,602.9 L1177.5,631.0 L1161.2,659.1 L1128.8,659.1 Z M1113.5,704.0 L1129.8,675.9 L1162.2,675.9 L1178.5,704.0 L1162.2,732.1 L1129.8,732.1 Z M1384.0,715.0 a54,54 0 1,0 108.0,0 a54,54 0 1,0 -108.0,0 Z M1252.2,717.5 a33.3,33.3 0 1,0 66.6,0 a33.3,33.3 0 1,0 -66.6,0 Z"/>
<polygon fill="#9b9b9b" stroke="#868686" stroke-width="1" points="949,822 1131,819 1131,857 947,859"/>
<polygon fill="#979797" stroke="#868686" stroke-width="1" points="947,859 1131,857 1131,884 946,887"/>
<polygon fill="#9b9b9b" stroke="#868686" stroke-width="1" points="1364,813 1542,810 1542,846 1366,849"/>
<polygon fill="#979797" stroke="#868686" stroke-width="1" points="1366,849 1542,846 1543,875 1366,878"/>
<ellipse cx="992.5" cy="837" rx="20" ry="16" fill="url(#hg)"/>
<ellipse cx="1088" cy="834" rx="20" ry="16" fill="url(#hg)"/>
<ellipse cx="1406.5" cy="830" rx="20" ry="16" fill="url(#hg)"/>
<ellipse cx="1502.5" cy="828" rx="20" ry="16" fill="url(#hg)"/>
<path fill="#aaaaaa" fill-rule="evenodd" stroke="#858585" stroke-width="1" d="M1235.0,719.0 a52.5,52.5 0 1,0 105.0,0 a52.5,52.5 0 1,0 -105.0,0 Z M1252.2,717.5 a33.3,33.3 0 1,0 66.6,0 a33.3,33.3 0 1,0 -66.6,0 Z"/>
<path d="M1334.5,694 Q1341,718 1334.5,742 Q1339.5,742 1340.5,718 Q1339.5,694 1334.5,694 Z" fill="#4a4c4b"/>
<circle cx="1366.5" cy="646.5" r="12.5" fill="none" stroke="#8c8c8c" stroke-width="0.8" stroke-dasharray="2 2"/>
<circle cx="1366.5" cy="646.5" r="8" fill="#434544"/>
<circle cx="1505" cy="643" r="12.5" fill="none" stroke="#8c8c8c" stroke-width="0.8" stroke-dasharray="2 2"/>
<circle cx="1505" cy="643" r="8" fill="#434544"/>
<circle cx="1370" cy="785" r="12.5" fill="none" stroke="#8c8c8c" stroke-width="0.8" stroke-dasharray="2 2"/>
<circle cx="1370" cy="785" r="8" fill="#434544"/>
<circle cx="1508" cy="782" r="12.5" fill="none" stroke="#8c8c8c" stroke-width="0.8" stroke-dasharray="2 2"/>
<circle cx="1508" cy="782" r="8" fill="#434544"/>
<rect x="719" y="85" width="978" height="57.5" fill="#f5f5f5" fill-opacity="0.85"/>
<line x1="719" y1="142" x2="1697" y2="142" stroke="#eeeeee" stroke-opacity="0.8" stroke-width="1"/>
<g stroke="#2e2e2e" stroke-width="1.6" fill="none" stroke-linejoin="round">
 <!-- add cube -->
 <path d="M726,105.5 h24.5 v25 h-24.5 z M726,105.5 l12,-12 h24.5 l-12,12 M762.5,93.5 v19.5"/>
 <circle cx="762" cy="121.5" r="8.5" fill="#dadada"/>
 <path d="M762,115.5 v12 M756,121.5 h12"/>
 <!-- add grid -->
 <path d="M780.5,95 h34 v34.5 h-34 z M780.5,102 h34 M780.5,109 h34 M780.5,116 h34 M780.5,123 h34 M787.5,95 v34.5 M794.5,95 v34.5 M801.5,95 v34.5 M808.5,95 v34.5" stroke-width="1.4"/>
 <circle cx="811.8" cy="124" r="8.5" fill="#dadada"/>
 <path d="M811.8,118 v12 M805.8,124 h12"/>
 <!-- auto orient -->
 <path d="M851.5,95.5 L873.5,101.5 L867.5,122.5 L845.5,116.5 Z"/>
 <path d="M844,111 q-4,2 -6,6" stroke-width="1.3"/>
 <path d="M834,116.5 l9.5,2 -7,6.5 z" stroke-width="1.3"/>
 <rect x="836.5" y="128.5" width="35" height="4" rx="2" stroke-width="1.3"/>
 <text x="832" y="106.5" font-family="Liberation Sans" font-size="7.5" font-weight="bold" fill="#2e2e2e" stroke="none" textLength="16" lengthAdjust="spacingAndGlyphs">AUTO</text>
 <!-- arrange -->
 <rect x="885.5" y="95" width="37" height="37.5" stroke-width="1.6"/>
 <rect x="889.5" y="98.5" width="30.5" height="11" rx="1" stroke-width="1.4"/>
 <rect x="889.5" y="112.5" width="9" height="16" rx="1" stroke-width="1.4"/>
 <rect x="901.5" y="112.5" width="18.5" height="6" rx="1" stroke-width="1.4"/>
 <rect x="901.5" y="121.5" width="18.5" height="7" rx="1" stroke-width="1.4"/>
 <!-- separators -->
 <line x1="1113.5" y1="95" x2="1113.5" y2="133"/>
 <line x1="1623.5" y1="95" x2="1623.5" y2="133"/>
 <!-- puzzle -->
 <path d="M1647.5,118.3 V103.4 H1662.6 V107.8 A3,3 0 1 0 1662.6,113.8 V118.3" stroke-width="1.5"/>
 <path d="M1647.5,118.3 H1652 A3,3 0 1 0 1658,118.3 H1667 A3,3 0 1 1 1673,118.3 H1677.6 V133.3 H1647.5 Z" stroke-width="1.5"/>
 <path d="M1662.6,118.3 V122.6 A3,3 0 1 1 1662.6,128.6 V133.3" stroke-width="1.5"/>
 <path d="M1675,93.9 L1685.8,104.4 L1675,114.8 L1672.4,112.2 A3,3 0 1 0 1668.2,108 L1664.6,104.4 L1667.6,101.4 A3,3 0 1 1 1671.8,97.2 Z" stroke-width="1.5"/>
</g>
<g stroke="#cfcfcf" stroke-width="1.5" fill="none" stroke-linejoin="round">
 <path d="M948,94.5 h23 l6,6 v28 M954,102 h22 l6,6 v27 h-28 z"/>
 <rect x="963.5" y="108.5" width="13" height="18" rx="6.5"/>
 <path d="M1000,94.5 h23 l6,6 v28 M1006,102 h22 l6,6 v27 h-28 z"/>
 <path d="M1015.5,127 v-18.5 h10 q5,0 5,5 q0,5 -5,5 h-10"/>
 <rect x="1053.5" y="103" width="33" height="5" rx="1"/><rect x="1053.5" y="110.5" width="33" height="5" rx="1"/><rect x="1053.5" y="118" width="33" height="5" rx="1"/><rect x="1053.5" y="125.5" width="33" height="4.5" rx="1"/>
 <path d="M1157,93 v16 M1157,118 v17 M1138,115 h14 M1161,115 h14 M1151,99 l6,-6 6,6 M1151,129 l6,6 6,-6 M1144,109 l-6,6 6,6 M1170,109 l6,6 -6,6"/>
 <path d="M1191,118 a19,19 0 0 1 33,-12"/><path d="M1208,106 l14,14 -14,14 -14,-14 z"/><path d="M1219,98 l9,-1 -1,9 z"/>
 <path d="M1243,112 h21 v21 h-21 z M1243,95 v40 M1280,95 v38 M1243,95 h37 M1264,112 l11,-11"/>
 <path d="M1318,96 l19,4 -5,20 -19,-4 z M1301,130 h36 M1306,112 l-5,10 9,-2"/>
 <path d="M1351,95.5 h34 v17 h-34 z M1351,117.5 h34 v17 h-34 z"/>
 <path d="M1401,107 h20 v20 h-20 z M1413,95 h21 v21 h-21 z"/>
 <path d="M1455,95.5 h35 v38 h-16 v-20 h-19 z M1458,113.5 h12 v20 h-12 z"/>
 <path d="M1508,107 h24 v24 h-24 z M1508,107 l11,-11 h24 l-11,11 M1543,96 v24 l-11,11"/>
 <path d="M1563,95.5 h28 v5 h-11 v32 h-7 v-32 h-10 z"/><circle cx="1594" cy="128" r="4"/>
</g>

</svg>

</div>
<div id="band" class="a"></div>
<div id="rstrip" class="a"></div>
<div id="taskbar" class="a"></div>
<div class="a" style="left:60px;top:1030px;width:360px;height:50px;background:#f2f2f2"></div>
<div class="a" style="left:1352px;top:1030px;width:61px;height:50px;background:#2e2e2e"></div>
<svg class="a" style="left:0;top:1030px" width="1920" height="50" viewBox="0 1030 1920 50">
 <defs>
  <radialGradient id="sat" cx="0.5" cy="0.5" r="0.5"><stop offset="0.6" stop-color="#12121c"/><stop offset="0.85" stop-color="#3a3a48"/><stop offset="1" stop-color="#f2f2f2" stop-opacity="0"/></radialGradient>
  <linearGradient id="plan" x1="0" y1="0" x2="0.3" y2="1"><stop offset="0" stop-color="#b88a6a"/><stop offset="0.5" stop-color="#e0a060"/><stop offset="1" stop-color="#f0a848"/></linearGradient>
  <linearGradient id="stm" x1="0" y1="0" x2="0" y2="1"><stop offset="0" stop-color="#1b2250"/><stop offset="1" stop-color="#1a6fb0"/></linearGradient>
  <linearGradient id="ubi" x1="0" y1="0" x2="1" y2="1"><stop offset="0" stop-color="#3b6ee8"/><stop offset="0.4" stop-color="#a03cc8"/><stop offset="0.7" stop-color="#e8a040"/><stop offset="1" stop-color="#30c060"/></linearGradient>
 </defs>
 <!-- windows -->
 <path d="M20,1046.5 L28.8,1045.3 V1054.3 H20 Z M30.2,1045.1 L40,1043.8 V1054.3 H30.2 Z M20,1055.6 H28.8 V1064.7 L20,1063.5 Z M30.2,1055.6 H40 V1066.2 L30.2,1064.9 Z" fill="#fff"/>
 <!-- magnifier -->
 <circle cx="88" cy="1050.5" r="6.3" fill="none" stroke="#222" stroke-width="1.4"/>
 <line x1="83.5" y1="1055" x2="75.5" y2="1064.5" stroke="#222" stroke-width="1.6"/>
 <!-- saturn -->
 <ellipse cx="370" cy="1056" rx="47" ry="25" transform="rotate(-12 370 1056)" fill="url(#sat)"/>
 <g transform="rotate(-12 371 1057)">
  <path d="M335,1057 a36,11 0 0 1 72,0" fill="none" stroke="#9a7c50" stroke-width="5"/>
 </g>
 <circle cx="371" cy="1050.5" r="16" fill="url(#plan)"/>
 <g transform="rotate(-12 371 1057)">
  <path d="M335,1057 a36,11 0 0 0 72,0" fill="none" stroke="#c4a270" stroke-width="5"/>
  <path d="M337,1057 a34,9 0 0 0 68,0" fill="none" stroke="#e0c89a" stroke-width="1"/>
 </g>
 <circle cx="352" cy="1037" r="1.2" fill="#fff"/><circle cx="394" cy="1071" r="1.5" fill="#fff"/><circle cx="359" cy="1074" r="1" fill="#fff"/><circle cx="411" cy="1053" r="1" fill="#fff"/>
 <!-- task view -->
 <g stroke="#fff" stroke-width="1.2" fill="none">
  <path d="M440.5,1045 v3 h11.5 v-3 M440.5,1065 v-3 h11.5 v3"/><rect x="440.5" y="1051" width="11.5" height="8"/>
  <line x1="458.5" y1="1045" x2="458.5" y2="1065"/>
 </g>
 <rect x="457" y="1052" width="3" height="3" fill="#fff"/>
 <!-- explorer -->
 <path d="M500,1044.5 h9 l2,2 h16 v19 h-27 z" fill="#f5c542"/>
 <rect x="500" y="1048" width="27.3" height="17.6" fill="#fad56a"/>
 <path d="M505,1065.5 v-8.5 h17 v8.5 h-4 v-5 h-9 v5 z" fill="#3d8ee0"/>
 <!-- store -->
 <rect x="561" y="1045" width="29" height="25" rx="4" fill="#f4f4f4"/>
 <path d="M568.5,1046 v-4 h14 v4" stroke="#3aa0e0" stroke-width="2" fill="none"/>
 <rect x="570" y="1052" width="5" height="5" fill="#f25022"/><rect x="576" y="1052" width="5" height="5" fill="#7fba00"/>
 <rect x="570" y="1058" width="5" height="5" fill="#00a4ef"/><rect x="576" y="1058" width="5" height="5" fill="#ffb900"/>
 <!-- brave -->
 <path d="M629,1041 h17 l4,5 -2,4 2,7 -4,8 -8,5 -8,-5 -4,-8 2,-7 -2,-4 z" fill="#f24e1e"/>
 <path d="M632,1049 h11 l2,4 -3,6 -4,5 -4,-5 -3,-6 z" fill="#fff"/>
 <path d="M634.5,1056 l3.5,3 3.5,-3" stroke="#f24e1e" stroke-width="1.3" fill="none"/>
 <rect x="613" y="1077" width="51" height="3" fill="#76b9ed"/>
 <!-- steam -->
 <circle cx="699.5" cy="1055" r="14.5" fill="url(#stm)"/>
 <circle cx="704.5" cy="1050" r="4.5" fill="none" stroke="#fff" stroke-width="2"/>
 <path d="M685.5,1056 l9,4 a4,4 0 1 0 2,-6 l5,-3" stroke="#fff" stroke-width="2.5" fill="none"/>
 <!-- discord -->
 <circle cx="762" cy="1055" r="15" fill="#5865f2"/>
 <path d="M753,1049.5 q4,-3 6,-3 l1,1.5 h4 l1,-1.5 q2,0 6,3 q2,5 2,11 q-3,2 -5,2.5 l-1,-2 h-10 l-1,2 q-2,-0.5 -5,-2.5 q0,-6 2,-11 z" fill="#fff"/>
 <circle cx="758.5" cy="1055.5" r="1.8" fill="#5865f2"/><circle cx="765.5" cy="1055.5" r="1.8" fill="#5865f2"/>
 <!-- ubisoft -->
 <circle cx="823.8" cy="1055" r="15" fill="url(#ubi)"/>
 <circle cx="823.8" cy="1055" r="12" fill="#15151a"/>
 <path d="M814,1055 a10,10 0 1 1 10,10 M818,1055 a6,6 0 1 1 6,6" stroke="#fff" stroke-width="2" fill="none"/>
 <circle cx="824" cy="1056" r="2" fill="#fff"/>
 <!-- amazon games -->
 <text x="874" y="1056.5" font-family="Liberation Sans" font-size="9" fill="#e8e8e8" textLength="24" lengthAdjust="spacingAndGlyphs">games</text>
 <path d="M876,1058.5 q9,3.5 19,-0.5 l-2,-1.5" stroke="#f0a030" stroke-width="1.4" fill="none"/>
 <!-- epic -->
 <path d="M935,1040 h23 v25 l-11.5,3.5 -11.5,-3.5 z" fill="#000"/>
 <text x="937.5" y="1055" font-family="Liberation Sans" font-size="13" fill="#fff" textLength="18.5" lengthAdjust="spacingAndGlyphs">EPIC</text>
 <text x="938" y="1061.5" font-family="Liberation Sans" font-size="4.5" font-weight="bold" fill="#fff" textLength="17" lengthAdjust="spacingAndGlyphs">GAMES</text>
 <!-- app 1010 -->
 <rect x="998" y="1042.5" width="24" height="24.5" rx="5" fill="#1d2330"/>
 <rect x="1005.5" y="1047" width="8" height="14" fill="none" stroke="#3ab8d8" stroke-width="1.5"/>
 <path d="M1007.5,1052 l2,-2 2,2 M1007.5,1056 l2,2 2,-2" stroke="#3ab8d8" stroke-width="1.2" fill="none"/>
 <!-- minecraft -->
 <rect x="1057" y="1040" width="30.3" height="30" fill="#5aac3c"/>
 <rect x="1063" y="1046" width="6" height="6" fill="#000"/><rect x="1075" y="1046" width="6" height="6" fill="#000"/>
 <path d="M1069,1052 h6 v3 h3 v9 h-3 v-3 h-6 v3 h-3 v-9 h3 z" fill="#000"/>
 <!-- obs -->
 <circle cx="1133.8" cy="1055" r="14" fill="#302e31" stroke="#e0e0e0" stroke-width="1.6"/>
 <path d="M1128,1046 q-2,6 4,7 M1143,1058 q-5,-5 -9,-2 M1126,1062 q5,-3 5,-7" stroke="#d0d0d0" stroke-width="2.2" fill="none"/>
 <!-- handbrake -->
 <defs><radialGradient id="hbg" cx="0.5" cy="0.45" r="0.5"><stop offset="0" stop-color="#e83a20"/><stop offset="0.6" stop-color="#d85a30"/><stop offset="1" stop-color="#e8b890"/></radialGradient></defs>
 <path d="M1182,1050 h12.5 q0.5,9 -6.2,9.5 q-6.7,-0.5 -6.3,-9.5 z" fill="url(#hbg)"/>
 <path d="M1188.2,1059.5 v6" stroke="#cfcfcf" stroke-width="1.2"/>
 <ellipse cx="1189.3" cy="1067" rx="4.5" ry="1.5" fill="none" stroke="#dcdcdc" stroke-width="1.2"/>
 <circle cx="1184" cy="1043" r="1.5" fill="#c040a0"/><ellipse cx="1185" cy="1046" rx="3" ry="1.2" fill="#e0d090"/>
 <path d="M1190,1044.5 l6,2.5 l-6,0 z" fill="#30c030"/>
 <ellipse cx="1202.5" cy="1058" rx="6.5" ry="8.3" fill="#c89a48"/>
 <path d="M1197,1054 l11,8 M1197,1060 l9,6 M1199,1051 l9,6 M1208,1053 l-10,10 M1206,1051 l-9,8 M1208,1059 l-7,7" stroke="#8a6a28" stroke-width="0.7"/>
 <path d="M1198,1050 l-1,-7 l3,4 l2,-6 l2,6 l3,-5 l-1,8 z" fill="#3a8a30"/>
 <!-- file arrow -->
 <path d="M1251,1041 h13 l7.5,7 v19 h-20.5 z" fill="#cfe4f7"/>
 <rect x1="0" x="1251" y="1052" width="20.5" height="6" fill="#f5c860"/>
 <path d="M1243,1052 h8 v-4 l6,7 -6,7 v-4 h-8 z" fill="#e8743a"/>
 <!-- polyhedron -->
 <path d="M1310,1041 h19 l6,13.5 -6,13 h-19 l-5.5,-13 z" fill="#8a8ca8"/>
 <path d="M1320,1041 h9 l6,13.5 -6,13 h-14 z" fill="#b85a48"/>
 <path d="M1310,1041 l10,10 -5,16" stroke="#a8aac0" stroke-width="1" fill="none"/>
 <!-- bambu -->
 <rect x="1367" y="1040" width="30.3" height="30" rx="7" fill="#00ae42"/>
 <rect x="1374" y="1046" width="7" height="18" fill="#fff"/><rect x="1383" y="1046" width="7" height="18" fill="#fff"/>
 <rect x="1352" y="1077" width="61" height="3" fill="#76b9ed"/>
 <!-- cricut -->
 <rect x="1429" y="1040.5" width="29.5" height="29" rx="6" fill="#fff"/>
 <text x="1431" y="1058" font-family="Liberation Sans" font-size="9" font-weight="bold" fill="#3bb890" textLength="25" lengthAdjust="spacingAndGlyphs">cricut</text>
 <!-- fire -->
 <path d="M1521,1042 q-1,5 -6,10 q-5,6 -3,10 q2,6 9,6 q8,0 10,-7 q1,-6 -4,-11 q0,4 -3,5 q1,-8 -3,-13 z" fill="#e8533f"/>
 <path d="M1518,1059 q1,-3 3,-4 q0,3 2,3 q1,-1 1,-3 q3,3 2,6 q-1,4 -4,4 q-4,0 -4,-6 z" fill="#141414"/>
 <!-- tray -->
 <polyline points="1627,1059 1635,1051 1643,1059" stroke="#fff" stroke-width="1.3" fill="none"/>
 <g stroke="#fff" stroke-width="1.2" fill="none">
  <rect x="1659.5" y="1049" width="10" height="10" rx="1.5"/><path d="M1669.5,1052 l3.5,-2 v8 l-3.5,-2"/>
  <path d="M1661,1046 q3.5,-1.5 7,0 M1661,1062 q3.5,1.5 7,0"/>
  <rect x="1688.5" y="1050.5" width="15" height="9" rx="1"/><line x1="1705" y1="1053" x2="1705" y2="1057"/>
  <path d="M1686,1048 v5 M1684.5,1048 v2 M1687.5,1048 v2 M1686,1053 v8"/>
  <path d="M1718.5,1063 a15,15 0 0 1 14,-15 M1722,1063 a11,11 0 0 1 10.5,-11 M1725.5,1063 a7,7 0 0 1 7,-7"/>
  <path d="M1745,1052 h3 l5,-5 v17 l-5,-5 h-3 z M1756,1052 q2,3 0,6 M1759,1049 q4,6 0,12 M1762,1047 q5,8 0,17"/>
 </g>
 <circle cx="1731.5" cy="1061.5" r="1.3" fill="#fff"/>
 <!-- notifications -->
 <path d="M1869,1045 h20 v17 h-14 l-5,4 v-4 h-1 z" fill="#fff"/>
 <path d="M1872,1050 h14 M1872,1054 h14 M1872,1058 h10" stroke="#141414" stroke-width="1.2"/>
 <circle cx="1888.5" cy="1064.5" r="10" fill="#2b2b2b" stroke="#8a8a8a" stroke-width="1"/>
 <text x="1884" y="1070" font-family="Liberation Sans" font-size="14" font-weight="bold" fill="#fff">2</text>
 <line x1="1914.5" y1="1030" x2="1914.5" y2="1080" stroke="#555" stroke-width="1"/>
</svg>
<div class="t" style="left:110px;top:1046.2px;font-size:18.5px;color:#333">Type here to search</div>
<div class="t" style="left:1546px;top:1047px;font-size:17.5px;color:#fff">Wild...</div>
<div class="t" style="left:1786.5px;top:1036.9px;font-size:14px;color:#fff">1:01 PM</div>
<div class="t" style="left:1778px;top:1058.5px;font-size:15px;color:#fff">8/27/2023</div>

</body></html>
